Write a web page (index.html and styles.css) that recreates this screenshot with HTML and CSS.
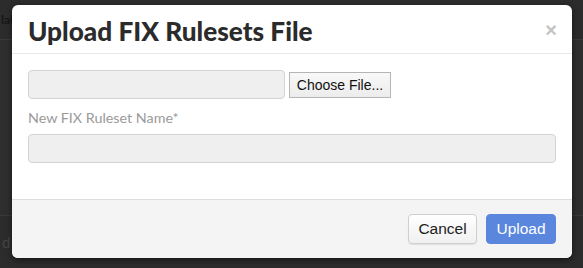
FILE: index.html
```html
<!DOCTYPE html>
<html>
<head>
<meta charset="utf-8">
<link rel="stylesheet" href="styles.css">
</head>
<body>
<div class="page">
  <div class="topbar"><span class="bg-text">lat</span></div>
  <div class="content"></div>
  <div class="bottombar"><span class="bg-text2">d</span></div>
</div>
<div class="modal">
  <div class="modal-header">
    <h1 class="modal-title">Upload FIX Rulesets File</h1>
    <span class="close">×</span>
  </div>
  <div class="modal-body">
    <div class="file-row">
      <div class="file-field"></div>
      <button class="choose-btn">Choose File...</button>
    </div>
    <label class="field-label">New FIX Ruleset Name*</label>
    <div class="text-field"></div>
  </div>
  <div class="modal-footer">
    <button class="btn btn-cancel">Cancel</button>
    <button class="btn btn-upload">Upload</button>
  </div>
</div>
</body>
</html>
```
FILE: styles.css
```css
* {
  box-sizing: border-box;
}
html, body {
  margin: 0;
  padding: 0;
  width: 583px;
  height: 268px;
  overflow: hidden;
  background: #2f2f2f;
}
.page {
  display: flex;
  flex-direction: column;
  height: 268px;
}
.topbar {
  height: 40px;
  border-bottom: 1px solid #3a3a3a;
  background: #2c2c2c;
  display: flex;
  align-items: center;
  padding-left: 1px;
}
.bg-text {
  font-family: "Lato", sans-serif;
  font-weight: 700;
  font-size: 12px;
  color: #161616;
}
.content {
  flex: 1;
  background: #2e2e2e;
}
.bottombar {
  height: 53px;
  border-top: 1px solid #3a3a3a;
  background: #2c2c2c;
  display: flex;
  align-items: center;
  padding-left: 2px;
}
.bg-text2 {
  font-family: "Lato", sans-serif;
  font-size: 15px;
  color: #454545;
}
.modal {
  position: absolute;
  left: 12px;
  top: 5px;
  width: 560px;
  height: 253px;
  background: #fff;
  border-radius: 6px;
  box-shadow: 0 2px 6px rgba(0,0,0,0.5);
  display: flex;
  flex-direction: column;
  overflow: hidden;
}
.modal-header {
  height: 49px;
  border-bottom: 1px solid #e8e8e8;
  display: flex;
  align-items: center;
  justify-content: space-between;
  padding: 0 15px 0 16px;
}
.modal-title {
  margin: 0;
  font-family: "Lato", sans-serif;
  font-weight: 900;
  font-size: 26.2px;
  color: #2b2b2b;
  padding-top: 3px;
}
.close {
  font-family: "Liberation Sans", sans-serif;
  font-size: 20px;
  font-weight: 700;
  color: #c4c4c4;
  line-height: 1;
  padding-top: 1px;
}
.modal-body {
  flex: 1;
  padding: 16px 16px 0 16px;
  display: flex;
  flex-direction: column;
}
.file-row {
  display: flex;
  align-items: center;
  gap: 4px;
}
.file-field {
  width: 257px;
  height: 29px;
  background: #efefef;
  border: 1px solid #d3d3d3;
  border-radius: 4px;
}
.choose-btn {
  height: 26px;
  width: 102px;
  padding: 0;
  background: linear-gradient(#f8f8f8, #ececec);
  border: 1px solid #b5b5b5;
  border-radius: 0;
  font-family: "Liberation Sans", sans-serif;
  font-size: 14px;
  color: #111;
}
.field-label {
  font-family: "Lato", sans-serif;
  font-size: 14.3px;
  color: #9a9a9a;
  margin-top: 10px;
  line-height: 18px;
}
.text-field {
  margin-top: 7px;
  height: 29px;
  background: #efefef;
  border: 1px solid #d3d3d3;
  border-radius: 4px;
}
.modal-footer {
  height: 59px;
  border-top: 1px solid #dddddd;
  background: #f4f4f4;
  display: flex;
  justify-content: flex-end;
  align-items: center;
  gap: 9px;
  padding: 0 16px 0 0;
}
.btn {
  height: 30px;
  border-radius: 4px;
  font-family: "Liberation Sans", sans-serif;
  font-size: 15.5px;
  padding: 0;
}
.btn-cancel {
  width: 69px;
  background: linear-gradient(#ffffff, #f0f0f0);
  border: 1px solid #cfcfcf;
  color: #222;
  box-shadow: 0 1px 1px rgba(0,0,0,0.08);
}
.btn-upload {
  width: 70px;
  background: #5a87dd;
  border: 1px solid #5a87dd;
  color: #fff;
}
```
